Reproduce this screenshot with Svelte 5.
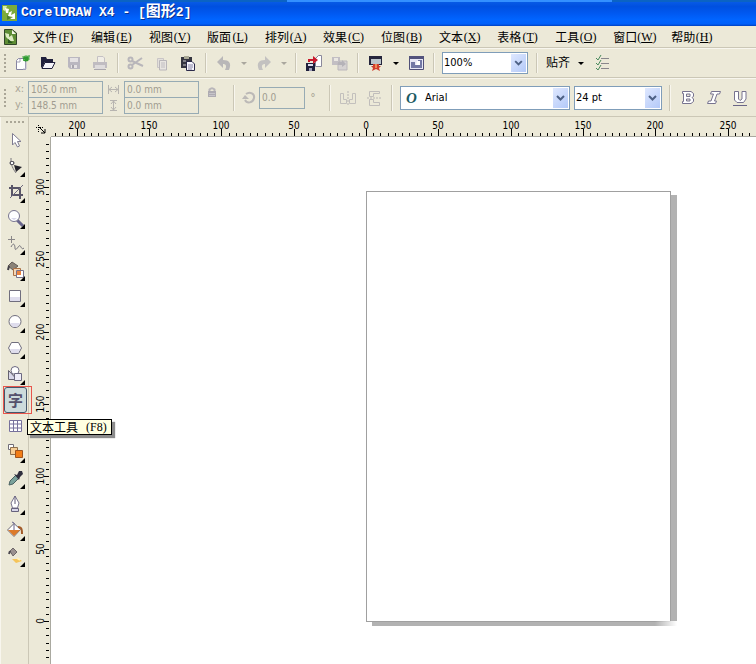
<script lang="ts">
	const menus = [
		{ label: '文件', key: 'F' },
		{ label: '编辑', key: 'E' },
		{ label: '视图', key: 'V' },
		{ label: '版面', key: 'L' },
		{ label: '排列', key: 'A' },
		{ label: '效果', key: 'C' },
		{ label: '位图', key: 'B' },
		{ label: '文本', key: 'X' },
		{ label: '表格', key: 'T' },
		{ label: '工具', key: 'O' },
		{ label: '窗口', key: 'W' },
		{ label: '帮助', key: 'H' }
	];

	const tools = [
		{ name: 'pick', flyout: false },
		{ name: 'shape', flyout: true },
		{ name: 'crop', flyout: true },
		{ name: 'zoom', flyout: true },
		{ name: 'freehand', flyout: true },
		{ name: 'smartfill', flyout: true },
		{ name: 'rectangle', flyout: true },
		{ name: 'ellipse', flyout: true },
		{ name: 'polygon', flyout: true },
		{ name: 'shapes', flyout: true },
		{ name: 'text', flyout: false },
		{ name: 'table', flyout: false },
		{ name: 'blend', flyout: true },
		{ name: 'eyedropper', flyout: true },
		{ name: 'outline', flyout: true },
		{ name: 'fill', flyout: true },
		{ name: 'interactive', flyout: true }
	];

	// pixels for one minor tick (5 mm)
	const step = 7.234;
	// where 0 mm falls on each ruler
	const originX = 315;
	const originY = 484;

	let canvasWidth = $state(0);
	let canvasHeight = $state(0);

	// only the ticks that fall inside the given length
	function ticks(origin: number, length: number, dir: number) {
		const list = [];
		const first = -Math.floor(origin / step);
		const last = Math.floor((length - origin) / step);
		for (let i = first; i <= last; i++) {
			list.push({
				pos: Math.round(origin + i * step),
				major: i % 10 == 0,
				mm: Math.abs(dir * i * 5)
			});
		}
		return list;
	}

	let xTicks = $derived(ticks(originX, canvasWidth, 1));
	let yTicks = $derived(ticks(originY, canvasHeight, -1));

	let activeTool = $state('text');
	let zoom = $state('100%');
	let font = $state('Arial');
	let size = $state('24 pt');
</script>

{#snippet icon(name)}
	<svg class="icon" width="20" height="20" viewBox="0 0 20 20" fill="none" aria-hidden="true">
		{#if name == 'new'}
			<path d="M4.500 7.500L6.500 5.500H13.500V16.500H4.500z" fill="#fff" stroke="#8583a0" />
			<path d="M8 5.500V9H4.500" stroke="#a5a3b5" />
			<path d="M11 16H14V9" stroke="#b8b6cc" />
			<circle cx="14" cy="5.500" r="3" fill="#2f9a2f" />
			<path d="M10 4L18 3M17 2V7M11 8L13 6" stroke="#58b058" />
		{:else if name == 'open'}
			<path d="M3 14V4H8L9 6H15V9H7L4 15z" fill="#20203c" />
			<path d="M7 9.500H17L14 15.500H4z" fill="#f5f4fa" stroke="#20203c" />
		{:else if name == 'save'}
			<path d="M4 4H16V16H6L4 14z" fill="#bab7c0" />
			<path d="M6 5H14V9H6z" fill="#e5e2e3" />
			<path d="M7 12H13V15H7z" fill="#e5e2e3" />
			<path d="M8 12H10V15H8z" fill="#a7a4ad" />
		{:else if name == 'print'}
			<path d="M7.500 9V3.500H13L14.500 5V9" fill="#f1eee7" stroke="#c5c1c4" />
			<path d="M3 9H17V15H3z" fill="#c0bcc1" />
			<path d="M5 12H15V16H5z" fill="#dedbdc" />
			<path d="M4 16.500H16" stroke="#aaa7ac" />
		{:else if name == 'cut'}
			<path d="M6 8L17 13M6 12L16 5" stroke="#b8b6ba" stroke-width="2" />
			<circle cx="4.500" cy="6.500" r="2" stroke="#b8b6ba" stroke-width="2" />
			<circle cx="4.500" cy="13.500" r="2" stroke="#b8b6ba" stroke-width="2" />
		{:else if name == 'copy'}
			<path d="M5.500 5.500H11.500V14.500H5.500z" fill="#e3e0dc" stroke="#c9c5c6" />
			<path d="M7.500 7.500H14.500V17H7.500z" fill="#e8e5e1" stroke="#b9b6ba" />
			<path d="M9 10H13M9 12H13M9 14H13" stroke="#c0bdc1" />
		{:else if name == 'paste'}
			<path d="M3 4H14V15H3z" fill="#35353f" />
			<path d="M6 3H11V6H6z" fill="#aaa995" />
			<path d="M5 7H8V9H5zM5 11H8V13H5z" fill="#807f86" />
			<path d="M8.500 8.500H14L16.500 11V17.500H8.500z" fill="#f6f5fb" stroke="#2b2a4a" />
			<path d="M10 12H15M10 14H15M10 16H14" stroke="#8885a5" />
		{:else if name == 'undo'}
			<path d="M3 9L9 3V7C15 7 18 10 15 17H11C13 13 12 11 9 11V15z" fill="#b9b7b8" />
		{:else if name == 'redo'}
			<path d="M17 9L11 3V7C5 7 2 10 5 17H9C7 13 8 11 11 11V15z" fill="#c3c1c0" />
		{:else if name == 'import'}
			<path d="M11.500 5.500L14.500 2.500H17.500V13.500H11.500z" fill="#fff" stroke="#8a889b" />
			<path d="M2 10H11V18H2z" fill="#20203c" />
			<path d="M4 11H9V13H4z" fill="#dfdeee" />
			<path d="M5 15H8V18H5z" fill="#9c9bb6" />
			<path d="M4 9V6H9V3L14 7L9 11V8H6V9z" fill="#c8192b" />
		{:else if name == 'export'}
			<path d="M2 4H10V12H2z" fill="#c2bec3" />
			<path d="M4 5H8V8H4z" fill="#eae7e2" />
			<path d="M10 8H17V17H8V10z" fill="#d6d2d2" stroke="#bbb7bb" />
			<path d="M8 9H12V7L16 11L12 14V12H8z" fill="#b5b2b8" />
		{:else if name == 'launch'}
			<path d="M3 3H16V12H3z" fill="#25253c" />
			<path d="M5 6H15V11H5z" fill="#bbc4ca" />
			<path d="M7 11H13V13H15L13 15L14 18L10 16L6 18L7 15L5 13H7z" fill="#d03d2c" />
			<path d="M9 11H11V15H9z" fill="#ee8856" />
		{:else if name == 'welcome'}
			<path d="M3.500 3.500H17.500V16.500H3.500z" fill="#e7e7f5" stroke="#505078" />
			<path d="M3 3H18V6H3z" fill="#53537c" />
			<path d="M5 9H9V12H12V7H16V15H5z" fill="#7378a5" />
			<path d="M11 8L14 8V12H10z" fill="#fff" />
		{:else if name == 'options'}
			<path d="M9 5.500H17M9 10.500H17M9 15.500H17" stroke="#8a878c" />
			<path d="M4 5L6 7L9 2M4 10L6 12L9 7M4 15L6 17L9 12" stroke="#4a8a5c" />
		{:else if name == 'lock'}
			<path d="M7.500 9V6.500Q10 4 12.500 6.500V9" stroke="#b9b6ba" stroke-width="2" />
			<path d="M6 8H14V14H6z" fill="#aeabb2" />
			<path d="M7 10.500H13M7 12.500H13" stroke="#c7c4ca" />
		{:else if name == 'rotate'}
			<path d="M7 6C11 3 16 6 15 10C14 15 8 16 6 12" stroke="#bcb9b7" stroke-width="2" />
			<path d="M3 11L6 7L10 11z" fill="#bcb9b7" />
		{:else if name == 'mirrorh'}
			<path d="M2.500 5.500V15.500H8.500V11.500H5.500V5.500zM17.500 5.500V15.500H11.500V11.500H14.500V5.500z" stroke="#c3c0bd" />
			<path d="M10 3V18" stroke="#b9b6b5" stroke-dasharray="2 1" />
		{:else if name == 'mirrorv'}
			<path d="M5.500 3.500H15.500V5.500H9.500V8.500H5.500zM5.500 17.500H15.500V14.500H9.500V11.500H5.500z" stroke="#c0bdbb" />
			<path d="M3 10H17" stroke="#b9b6b5" stroke-dasharray="2 1" />
		{:else if name == 'bold'}
			<path d="M4.500 3.500H13L15.500 5.500V8.500L14 9.500L15.500 11V13.500L13 15.500H4.500V13.500H5.500V5.500H4.500zM8.500 6V8.500H12V6zM8.500 11V13H12V11z" fill="#fff" stroke="#77738f" />
		{:else if name == 'italic'}
			<path d="M7.500 3.500H16.500L15.500 6H13L10.500 13H12.500L11.500 15.500H3.500L4.500 13H7L9.500 6H6.500z" fill="#fff" stroke="#77738f" />
		{:else if name == 'underline'}
			<path d="M4.500 3.500H8.500V11L10 12.500L12 11V3.500H16V11L13.500 14.500H7L4.500 12z" fill="#fff" stroke="#77738f" />
			<path d="M3 17.500H17" stroke="#6a6688" />
		{:else if name == 'pick'}
			<path d="M6.500 3.500V15L9 12.500L11.500 17L13.500 16L11.500 11.500H15z" fill="#fff" stroke="#7f7c92" />
		{:else if name == 'shape'}
			<path d="M5 2C5 7 5 10 10 17M3 7H9" stroke="#77757b" />
			<path d="M4.500 5.500H7.500V8.500H4.500z" fill="#fff" stroke="#5b5962" />
			<path d="M8 9L16 11L10 16z" fill="#25242c" />
		{:else if name == 'crop'}
			<path d="M6 3V13H17M3 6H14V17" stroke="#595568" stroke-width="2" />
			<path d="M4 16L17 3" stroke="#706b80" />
		{:else if name == 'zoom'}
			<path d="M11 12L17 18" stroke="#68658c" stroke-width="3" />
			<circle cx="8" cy="8" r="5.500" fill="#fff" stroke="#77748f" />
			<path d="M5 10H11L8 12z" fill="#d8d7ea" />
		{:else if name == 'freehand'}
			<path d="M5.500 2V9M2 5.500H9" stroke="#8a8788" />
			<path d="M5 13C8 7 9 12 9 14C9 18 12 13 13 12C15 10 15 17 18 14" stroke="#77757c" />
		{:else if name == 'smartfill'}
			<path d="M2 6L6 2L12 6L7 10z" fill="#8b8378" stroke="#625b57" />
			<path d="M3 6L2 10" stroke="#454149" stroke-width="2" />
			<path d="M7.500 8.500H14.500V15.500H7.500z" fill="#f5d6b5" stroke="#ac7144" />
			<path d="M10.500 10.500H17.500V17.500H10.500z" fill="#fff" stroke="#77738b" />
			<path d="M11 11H15V15H11z" fill="#eb823e" />
		{:else if name == 'rectangle'}
			<path d="M3.500 4.500H14.500V15.500H3.500z" fill="#fff" stroke="#706e7e" />
			<path d="M4 11H14V15H4z" fill="#dfdded" />
		{:else if name == 'ellipse'}
			<circle cx="9" cy="9.500" r="6" fill="#fff" stroke="#706e7e" />
			<path d="M4 11H14L11 15H7z" fill="#dfdded" />
		{:else if name == 'polygon'}
			<path d="M5.500 4.500H12.500L15.500 10L12.500 15.500H5.500L2.500 10z" fill="#fff" stroke="#706e7e" />
			<path d="M4 11H14L12 15H6z" fill="#dfdded" />
		{:else if name == 'shapes'}
			<path d="M2.500 6.500L11 15.500H2.500z" fill="#d9d7e9" stroke="#64616f" />
			<circle cx="9" cy="6.500" r="4" fill="#fff" stroke="#6c6881" />
			<path d="M8.500 9.500H15.500V16.500H8.500z" fill="#efedf8" stroke="#6c6881" />
		{:else if name == 'table'}
			<path d="M3 5H16V16H3z" fill="#fff" />
			<path d="M3.500 4.500H15.500V15.500H3.500zM3 8H16M3 12H16M7.500 4V16M11.500 4V16" stroke="#77719c" />
		{:else if name == 'blend'}
			<path d="M2.500 2.500H7.500V7.500H2.500z" fill="#fff" stroke="#706d78" />
			<path d="M4.500 5.500H11.500V12.500H4.500z" fill="#f7cf97" stroke="#8f704d" />
			<path d="M9.500 8.500H16.500V15.500H9.500z" fill="#f37d16" stroke="#9e541f" />
		{:else if name == 'eyedropper'}
			<path d="M3 17L4 13L10 7L13 10L7 16z" fill="#7aa29c" stroke="#4b6262" />
			<path d="M8 6L11 7L13 3H16L17 6L14 9L13 12z" fill="#302f3e" />
		{:else if name == 'outline'}
			<path d="M9 2L13 9L11.500 14H6.500L5 9z" fill="#fff" stroke="#77738e" />
			<path d="M9 2V10" stroke="#5e5974" />
			<path d="M5.500 14.500H12.500V17.500H5.500z" fill="#d8d6e9" stroke="#66627d" />
		{:else if name == 'fill'}
			<path d="M1.500 10L8 3.500L14.500 9.500L8 16.500z" fill="#fff" stroke="#6b6876" />
			<path d="M2 10H14L8 16z" fill="#dc7a2a" />
			<path d="M8 10V3L6 2" stroke="#66628b" />
			<path d="M12 7C16 7 16 10 16 14" stroke="#a35a28" stroke-width="2" />
		{:else if name == 'interactive'}
			<path d="M4 5L7 2L11 6L7 10z" fill="#9a9190" stroke="#6e6769" />
			<path d="M4 5L3 8" stroke="#4c484f" stroke-width="2" />
			<path d="M6 13H13L16 15L10 17z" fill="#f5c45a" />
			<path d="M11 12L14 14" stroke="#fff2bd" stroke-width="2" />
		{/if}
	</svg>
{/snippet}

{#snippet logo()}
	<svg width="16" height="16" viewBox="0 0 16 16" aria-hidden="true">
		<path d="M0 0H15V16H0z" fill="#7cab3c" />
		<path d="M1 1H5L3 6L1 5z" fill="#d9edb2" />
		<path d="M3 3L7 4L6 8L10 6L9 10L13 8V14H8L11 12L6 11L7 8L4 8z" fill="#fff" />
		<path d="M5 10L9 13L5 15z" fill="#4f8030" />
	</svg>
{/snippet}

{#snippet caret(dim)}
	<svg width="14" height="20" viewBox="0 0 14 20" aria-hidden="true">
		<path d="M4 9H10L7 12z" fill={dim ? '#aaa79e' : '#000'} />
	</svg>
{/snippet}

{#snippet chevron()}
	<svg class="chevron" width="15" height="19" viewBox="0 0 15 19" aria-hidden="true">
		<path d="M4 7.500L7.500 11L11 7.500" fill="none" stroke="#4d6185" stroke-width="2" />
	</svg>
{/snippet}

<div class="window">
	<header class="title">
		{@render logo()}
		<h1>CorelDRAW X4 - [<span>图形</span>2]</h1>
	</header>

	<nav class="menu">
		<svg class="doc" width="16" height="16" viewBox="0 0 16 16" aria-hidden="true">
			<path d="M1.500 .5H9L13.500 4V15.500H1.500z" fill="#5e8d35" stroke="#31452a" />
			<path d="M9 1V5H13z" fill="#f5f8ea" />
			<path d="M2 4L6 5V8L9 6L11 12L7 12L3 8z" fill="#ddebc2" />
			<path d="M5 10L10 14H5z" fill="#2b5720" />
		</svg>
		{#each menus as menu}
			<button>{menu.label}<span class="key">(<u>{menu.key}</u>)</span></button>
		{/each}
	</nav>

	<div class="bar standard">
		<i class="grip"></i>
		<button aria-label="新建">{@render icon('new')}</button>
		<button aria-label="打开">{@render icon('open')}</button>
		<button aria-label="保存" disabled>{@render icon('save')}</button>
		<button aria-label="打印" disabled>{@render icon('print')}</button>
		<i class="sep"></i>
		<button aria-label="剪切" disabled>{@render icon('cut')}</button>
		<button aria-label="复制" disabled>{@render icon('copy')}</button>
		<button aria-label="粘贴">{@render icon('paste')}</button>
		<i class="sep"></i>
		<button aria-label="撤消" disabled>{@render icon('undo')}</button>
		<button class="narrow" aria-label="撤消列表" disabled>{@render caret(true)}</button>
		<button aria-label="重做" disabled>{@render icon('redo')}</button>
		<button class="narrow" aria-label="重做列表" disabled>{@render caret(true)}</button>
		<i class="sep"></i>
		<button aria-label="导入">{@render icon('import')}</button>
		<button aria-label="导出" disabled>{@render icon('export')}</button>
		<i class="sep"></i>
		<button aria-label="应用程序启动器">{@render icon('launch')}</button>
		<button class="narrow" aria-label="应用程序列表">{@render caret(false)}</button>
		<button aria-label="欢迎屏幕">{@render icon('welcome')}</button>
		<i class="sep"></i>
		<div class="combo zoom">
			<select aria-label="缩放级别" bind:value={zoom}>
				<option>100%</option>
				<option>200%</option>
			</select>
			{@render chevron()}
		</div>
		<i class="sep wide"></i>
		<button class="snap">贴齐{@render caret(false)}</button>
		<button aria-label="选项">{@render icon('options')}</button>
	</div>

	<div class="bar property">
		<i class="grip"></i>
		<div class="fields position">
			<label for="pos-x">x:</label>
			<input id="pos-x" value="105.0 mm" disabled />
			<label for="pos-y">y:</label>
			<input id="pos-y" value="148.5 mm" disabled />
		</div>
		<div class="fields dimension">
			<label for="dim-w" aria-label="宽度">
				<svg width="13" height="13" viewBox="0 0 13 13" fill="none" stroke="#b7b4b0">
					<path d="M1.500 2V11M11.500 2V11M2 6.500H11M5 4L2 6.500L5 9M8 4L11 6.500L8 9" />
				</svg>
			</label>
			<input id="dim-w" value="0.0 mm" disabled />
			<label for="dim-h" aria-label="高度">
				<svg width="13" height="13" viewBox="0 0 13 13" fill="none" stroke="#b7b4b0">
					<path d="M3 1.500H10M3 11.500H10M6.500 2V11M4 5L6.500 2L9 5M4 8L6.500 11L9 8" />
				</svg>
			</label>
			<input id="dim-h" value="0.0 mm" disabled />
		</div>
		<button class="ratio" aria-label="锁定比例" disabled>{@render icon('lock')}</button>
		<i class="sep"></i>
		<label class="angle">
			{@render icon('rotate')}
			<input value="0.0" aria-label="旋转角度" disabled />
			<span>°</span>
		</label>
		<i class="sep"></i>
		<button aria-label="水平镜像" disabled>{@render icon('mirrorh')}</button>
		<button aria-label="垂直镜像" disabled>{@render icon('mirrorv')}</button>
		<i class="sep"></i>
		<div class="combo font">
			<span class="opentype" aria-hidden="true">O</span>
			<select aria-label="字体" bind:value={font}>
				<option>Arial</option>
				<option>Tahoma</option>
			</select>
			{@render chevron()}
		</div>
		<div class="combo size">
			<select aria-label="字体大小" bind:value={size}>
				<option>24 pt</option>
				<option>36 pt</option>
			</select>
			{@render chevron()}
		</div>
		<i class="sep"></i>
		<button aria-label="粗体">{@render icon('bold')}</button>
		<button aria-label="斜体">{@render icon('italic')}</button>
		<button aria-label="下划线">{@render icon('underline')}</button>
	</div>

	<main>
		<div class="toolbox">
			<i class="grip flat"></i>
			{#each tools as tool}
				<div class="tool" class:active={activeTool == tool.name}>
					<button aria-label={tool.name} onclick={() => (activeTool = tool.name)}>
						{#if tool.name == 'text'}
							<span class="zi">字</span>
						{:else}
							{@render icon(tool.name)}
						{/if}
						{#if tool.flyout}
							<svg class="flyout" width="5" height="5" viewBox="0 0 5 5" aria-hidden="true">
								<path d="M5 0V5H0z" />
							</svg>
						{/if}
					</button>
					{#if tool.name == 'text'}
						<span class="tooltip" role="tooltip">文本工具<span class="key">(F8)</span></span>
					{/if}
				</div>
			{/each}
		</div>

		<div class="workspace">
			<svg class="corner" width="21" height="20" viewBox="0 0 21 20" fill="none" stroke="#000">
				<path d="M9.500 8V16M7 10.500H15" stroke-dasharray="1 1" />
				<path d="M10 10L16 16M16 12V16H12" />
			</svg>
			<svg class="ruler horizontal">
				{#each xTicks as tick}
					<path d="M{tick.pos}.5 {tick.major ? 12 : 16}V19" />
					{#if tick.major}
						<text x={tick.pos} y="12">{tick.mm}</text>
					{/if}
				{/each}
			</svg>
			<svg class="ruler vertical">
				{#each yTicks as tick}
					<path d="M{tick.major ? 15 : 17} {tick.pos}.5H20" />
					{#if tick.major}
						<text transform="translate(15 {tick.pos}) rotate(-90)">{tick.mm}</text>
					{/if}
				{/each}
			</svg>
			<div class="canvas" bind:clientWidth={canvasWidth} bind:clientHeight={canvasHeight}>
				<div class="page"></div>
			</div>
		</div>
	</main>
</div>

<style>
	:global(body) {
		margin: 0;
	}
	.window {
		display: flex;
		flex-direction: column;
		min-height: 100vh;
		background: #ece9d8;
		color: #000;
		font: 12px/16px "DejaVu Sans Condensed", "Noto Sans CJK SC", sans-serif;
		overflow: hidden;
	}
	button {
		display: flex;
		align-items: center;
		justify-content: center;
		flex: none;
		margin: 0;
		padding: 0;
		border: 0;
		background: none;
		color: inherit;
		font: inherit;
	}
	svg {
		display: block;
		flex: none;
	}

	.title {
		display: flex;
		align-items: center;
		gap: 3px;
		height: 26px;
		padding-left: 2px;
		box-sizing: border-box;
		background:
			linear-gradient(90deg, #0b63c4 38%, #3390ff 38%, #3390ff 81%, #0b63c4 81%) top / 100% 2px no-repeat,
			linear-gradient(#0a5fe8, #0050e0 25%, #0058f0 50%, #0064ff 75%, #0060fa 92%, #0040c0);
	}
	h1 {
		margin: 0;
		color: #fff;
		font: bold 13px/20px "Liberation Mono", "Noto Sans CJK SC", monospace;
		text-shadow: 1px 1px #0b318f;
		white-space: pre;
	}
	h1 span {
		font-size: 15px;
	}

	.menu {
		display: flex;
		align-items: center;
		height: 22px;
		padding-left: 3px;
		border-bottom: 1px solid #cbc7b6;
		box-sizing: border-box;
	}
	.doc {
		margin-right: 6px;
	}
	.menu button {
		padding: 0 8px;
		font-family: "Noto Sans CJK SC", sans-serif;
	}
	.key {
		font: 12px/14px "Liberation Serif", serif;
	}
	.menu .key {
		width: 18px;
	}

	.bar {
		display: flex;
		align-items: center;
		border-top: 1px solid #f8f6ee;
		border-bottom: 1px solid #cbc7b6;
		box-sizing: border-box;
	}
	.standard {
		height: 30px;
	}
	.property {
		height: 39px;
	}
	.bar button {
		width: 26px;
		height: 24px;
	}
	.bar .narrow {
		width: 14px;
	}
	.bar .snap {
		width: auto;
		gap: 4px;
		padding-right: 1px;
	}
	.grip {
		display: block;
		flex: none;
		width: 2px;
		height: 18px;
		margin: 0 3px 0 4px;
		background: repeating-linear-gradient(#aaa697 0 2px, transparent 2px 4px);
	}
	.grip.flat {
		width: 18px;
		height: 2px;
		margin: 0 0 4px 5px;
		background: repeating-linear-gradient(90deg, #aaa697 0 2px, transparent 2px 4px);
	}
	.sep {
		flex: none;
		width: 1px;
		height: 20px;
		margin: 0 4px;
		border-right: 1px solid #f8f6ee;
		background: #cbc7b6;
	}
	.sep.wide {
		margin: 0 8px;
	}
	.property .sep {
		height: 26px;
	}

	.combo {
		position: relative;
		flex: none;
		height: 22px;
	}
	.zoom {
		width: 86px;
		margin-left: 3px;
	}
	.font {
		width: 170px;
		height: 24px;
		margin: 0 4px 0 3px;
	}
	.size {
		width: 88px;
		height: 24px;
		margin-right: 3px;
	}
	select {
		width: 100%;
		height: 100%;
		padding: 0 20px 0 1px;
		border: 1px solid #7f9db9;
		border-radius: 0;
		background: #fff;
		color: #000;
		font: 11px/16px "DejaVu Sans Condensed", sans-serif;
		appearance: none;
	}
	.font select {
		padding-left: 24px;
	}
	.opentype {
		position: absolute;
		left: 6px;
		top: 4px;
		color: #1b5a62;
		font: italic bold 15px/16px "Liberation Serif", serif;
	}
	.chevron {
		position: absolute;
		top: 2px;
		right: 2px;
		height: calc(100% - 4px);
		background: linear-gradient(135deg, #dfe8ff, #b3c9f8);
		pointer-events: none;
	}

	.fields {
		display: grid;
		flex: none;
		align-items: center;
		padding-bottom: 1px;
	}
	.position {
		grid-template-columns: 13px 75px;
		margin-left: 6px;
	}
	.dimension {
		grid-template-columns: 21px 75px;
	}
	.dimension label {
		justify-self: center;
	}
	.fields label {
		color: #aaa697;
		font-size: 11px;
	}
	input {
		width: 100%;
		height: 17px;
		padding: 0 2px;
		border: 1px solid #97abb4;
		box-sizing: border-box;
		background: #ece9d8;
		color: #a09c90;
		font: 10px/12px "DejaVu Sans Condensed", sans-serif;
	}
	.fields input {
		margin-bottom: -1px;
	}
	.ratio {
		margin-right: 4px;
		padding-bottom: 10px;
	}
	.angle {
		display: flex;
		align-items: center;
		margin-right: 4px;
		color: #aaa697;
	}
	.angle input {
		width: 46px;
		height: 22px;
	}
	.angle span {
		width: 16px;
		text-align: center;
	}

	main {
		display: flex;
		flex: 1;
	}
	.toolbox {
		flex: none;
		width: 29px;
		padding-top: 4px;
		border-left: 1px solid #f8f6ee;
		border-right: 1px solid #cbc7b6;
		box-sizing: border-box;
	}
	.tool {
		position: relative;
		height: 26px;
		padding: 0 1px 0 3px;
	}
	.tool button {
		position: relative;
		width: 23px;
		height: 26px;
	}
	.active button {
		border: 1px solid #45566b;
		border-radius: 3px;
		box-sizing: border-box;
		background: #cddbdc;
	}
	.active::after {
		content: "";
		position: absolute;
		inset: -1px -4px -1px 2px;
		border: 1px solid #e8554c;
		pointer-events: none;
	}
	.zi {
		color: #55516c;
		font: bold 15px/20px "Noto Sans CJK SC", sans-serif;
	}
	.flyout {
		position: absolute;
		right: 2px;
		bottom: 2px;
	}
	.tooltip {
		position: absolute;
		z-index: 1;
		left: 26px;
		top: 32px;
		display: flex;
		gap: 8px;
		width: 79px;
		height: 14px;
		padding: 0 2px;
		border: 1px solid #000;
		background: #ffffe1;
		box-shadow: 3px 3px 1px #8c8c8c;
		font: 12px/14px "Noto Sans CJK SC", sans-serif;
		white-space: nowrap;
	}

	.workspace {
		display: grid;
		flex: 1;
		grid-template: 20px 1fr / 22px 1fr;
		min-width: 0;
	}
	.ruler {
		width: 100%;
		height: 100%;
		overflow: hidden;
		box-sizing: border-box;
		stroke: #000;
	}
	.ruler text {
		fill: #000;
		stroke: none;
		font: 10px "DejaVu Sans Condensed", sans-serif;
		text-anchor: middle;
	}
	.horizontal {
		border-bottom: 1px solid #aaa9a0;
	}
	.vertical {
		border-right: 1px solid #aaa9a0;
		/* the rows behind the ruler never stretch the window */
		height: 0;
		min-height: 100%;
	}
	.canvas {
		position: relative;
		min-height: 500px;
		background: #fff;
	}
	.page {
		position: absolute;
		left: 315px;
		top: 54px;
		width: 305px;
		height: 431px;
		border: 1px solid #a0a0a0;
		box-sizing: border-box;
		background: #fff;
		box-shadow: 6px 4px #b2b2b2;
	}
	.page::after {
		content: "";
		position: absolute;
		right: -7px;
		bottom: -5px;
		width: 22px;
		height: 5px;
		background: linear-gradient(90deg, transparent, #fff);
	}
</style>
